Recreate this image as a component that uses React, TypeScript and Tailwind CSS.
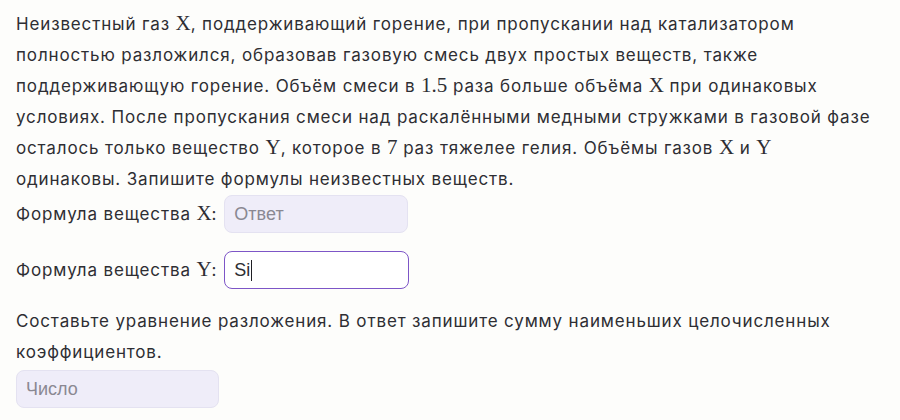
import React from 'react';

const M = ({ children }: { children: React.ReactNode }) => (
  <span className="font-['Liberation_Serif',serif] text-[21px] leading-none tracking-normal">{children}</span>
);

export default function App() {
  return (
    <div className="min-h-[420px] w-[900px] bg-[#fdfdfb] px-4 pt-[9px] font-['Inter',sans-serif] text-[17px] leading-[31px] tracking-[0.85px] text-[#2e2e33]">
      <p className="whitespace-nowrap">
        Неизвестный газ <M>X</M>, поддерживающий горение, при пропускании над катализатором
        <br />
        полностью разложился, образовав газовую смесь двух простых веществ, также
        <br />
        поддерживающую горение. Объём смеси в <M>1.5</M> раза больше объёма <M>X</M> при одинаковых
        <br />
        условиях. После пропускания смеси над раскалёнными медными стружками в газовой фазе
        <br />
        осталось только вещество <M>Y</M>, которое в <M>7</M> раз тяжелее гелия. Объёмы газов <M>X</M> и <M>Y</M>
        <br />
        одинаковы. Запишите формулы неизвестных веществ.
      </p>

      <div className="flex items-center gap-[7px]">
        <span>
          Формула вещества <M>X</M>:
        </span>
        <input
          placeholder="Ответ"
          className="h-[38px] w-[184px] rounded-lg border border-[#e4e2f1] bg-[#efedf9] px-[9px] font-['Liberation_Sans',sans-serif] text-[18px] tracking-normal outline-none placeholder:text-[#8a8892]"
        />
      </div>

      <div className="mt-[18px] flex items-center gap-[7px]">
        <span>
          Формула вещества <M>Y</M>:
        </span>
        <div className="relative">
          <input
            defaultValue="Si"
            className="h-[38px] w-[185px] rounded-lg border-[1.5px] border-[#7d55c7] bg-white px-[9px] font-['Liberation_Sans',sans-serif] text-[18px] tracking-normal text-[#2e2e33] outline-none"
          />
          <span className="absolute left-[27px] top-[9px] h-[21px] w-px bg-[#1f1f24]" />
        </div>
      </div>

      <p className="mt-[17px]">
        Составьте уравнение разложения. В ответ запишите сумму наименьших целочисленных
        <br />
        коэффициентов.
      </p>

      <input
        placeholder="Число"
        className="mt-[2px] h-[38px] w-[203px] rounded-lg border border-[#e4e2f1] bg-[#efedf9] px-[9px] font-['Liberation_Sans',sans-serif] text-[18px] tracking-normal outline-none placeholder:text-[#8a8892]"
      />
    </div>
  );
}
